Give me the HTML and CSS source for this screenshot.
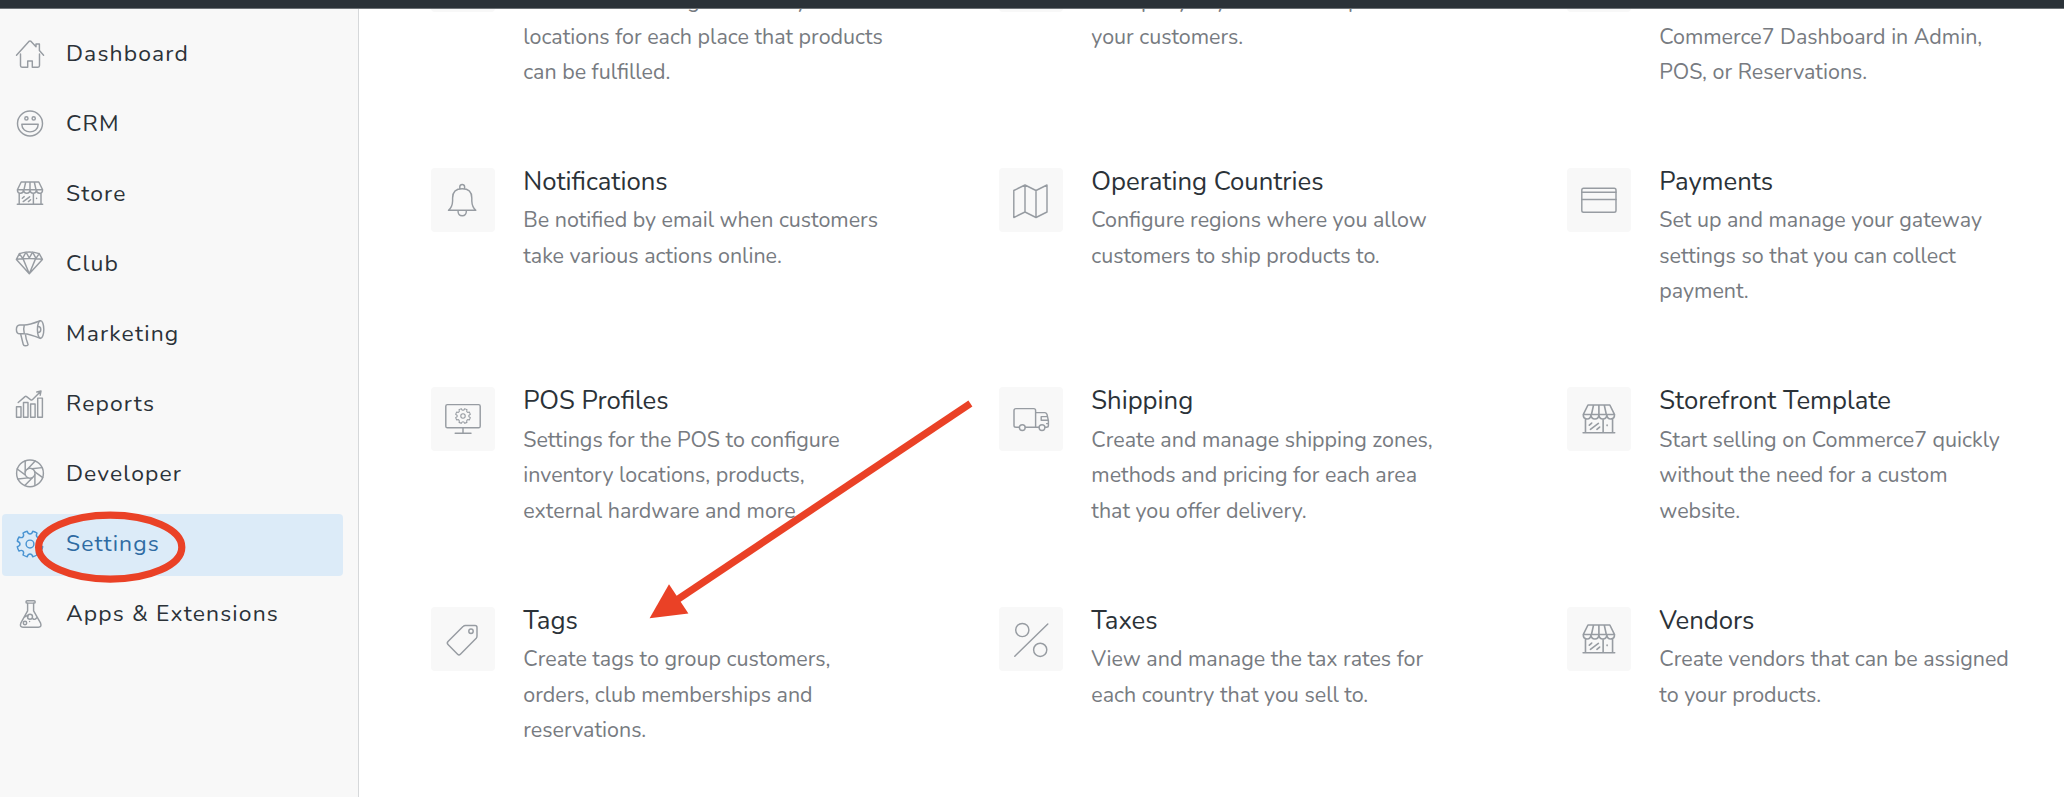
FILE: index.html
```html
<!DOCTYPE html>
<html lang="en">
<head>
<meta charset="utf-8">
<title>Settings</title>
<link rel="stylesheet" href="styles.css">
</head>
<body>
<svg class="sprite" aria-hidden="true">
  <symbol id="store" viewBox="0 0 28 28">
    <path d="M5.2 2H22.8L26.6 9.7H1.4ZM9.7 2L8 9.7M14 2V9.7M18.3 2L20 9.7M1.4 9.7C1.4 14.4 7.4 14.4 7.6 9.9C7.8 14.4 13.8 14.4 14 9.9C14.2 14.4 20.2 14.4 20.4 9.9C20.6 14.4 26.6 14.4 26.6 9.7M3.2 13V24.3M25 13V24.3M1.3 24.3H26.7M17.4 13.4V24.3M6.3 18.2L8.2 16.6M7.2 21.6L13.6 16.8M12.4 21.6L14.6 19.8M20.6 18.2V18.6"/>
  </symbol>
  <symbol id="gear" viewBox="-14 -14 28 28">
    <path d="M12.7 2.8A13 13 0 0 1 11 7C7.5 5.3 5.3 7.5 7 11A13 13 0 0 1 2.8 12.7C1.6 9.1-1.6 9.1-2.8 12.7A13 13 0 0 1-7 11C-5.3 7.5-7.5 5.3-11 7A13 13 0 0 1-12.7 2.8C-9.1 1.6-9.1-1.6-12.7-2.8A13 13 0 0 1-11-7C-7.5-5.3-5.3-7.5-7-11A13 13 0 0 1-2.8-12.7C-1.6-9.1 1.6-9.1 2.8-12.7A13 13 0 0 1 7-11C5.3-7.5 7.5-5.3 11-7A13 13 0 0 1 12.7-2.8C9.1-1.6 9.1 1.6 12.7 2.8Z"/>
    <circle r="3.9"/>
  </symbol>
</svg>

<header class="topbar"></header>

<div class="layout">
  <nav class="sidebar">
    <a class="nav-item"><svg class="nav-icon" viewBox="0 0 28 28"><path d="M.5 15.3L12.9 1.4Q14 .4 15.1 1.4L20 6.8V4H23.4V10.6L27.6 15.3M4.5 14V25.6Q4.5 27.2 6 27.2H11.7V21H16.3V27.2H22Q23.5 27.2 23.5 25.6V14"/></svg>Dashboard</a>
    <a class="nav-item"><svg class="nav-icon" viewBox="0 0 28 28"><circle cx="14" cy="13.5" r="12.5"/><circle cx="10.4" cy="8.4" r="1.6"/><circle cx="17.7" cy="8.4" r="1.6"/><path d="M5.8 14.2H22.2C22.2 24.4 5.8 24.4 5.8 14.2Z"/></svg>CRM</a>
    <a class="nav-item"><svg class="nav-icon"><use href="#store"/></svg>Store</a>
    <a class="nav-item"><svg class="nav-icon" viewBox="0 0 28 28"><path d="M3.4 3.6Q13.3 .6 23.2 3.6L26.4 9.4L13.3 23.8L.4 9.4ZM.4 9.2Q13.3 7.6 26.4 9.2M3.4 3.6L6.6 8.3L10 2.2L13.3 8L16.6 2.2L20 8.3L23.2 3.6M7 8.6L13.3 23.8L19.6 8.6"/></svg>Club</a>
    <a class="nav-item"><svg class="nav-icon" viewBox="0 0 28 28"><path d="M8.3 5Q13 5 24.3 .7M8.3 13.8Q13 14 24.3 18.3M8.3 5H3.8Q.4 5.4 .4 9.4Q.4 13.6 3.8 13.8H8.3Q7 9.4 8.3 5M4.6 13.8L7.2 24.2Q7.6 25.8 9.2 25.7L11 25.5Q12.6 25 11.8 23.6Q9.8 19 9.4 14"/><ellipse cx="24.6" cy="9.5" rx="3.2" ry="8.9"/><path d="M22 6.4Q24.8 6.4 24.8 9.4T22 12.4"/></svg>Marketing</a>
    <a class="nav-item"><svg class="nav-icon" viewBox="0 0 28 28"><path d="M.5 16.8H5V27.2H.5ZM7.5 12.4H12V27.2H7.5ZM14.6 13.9H19.1V27.2H14.6ZM21.7 8.1H26.4V27.2H21.7ZM2.2 12.5L9 6.6Q9.8 6 10.6 6.6L14.8 9.8Q15.8 10.4 16.6 9.6L24.6 1.4M20.8 2L25 1L24.2 5.2M22.4 1.8L24.4 3.6"/></svg>Reports</a>
    <a class="nav-item"><svg class="nav-icon" viewBox="0 0 28 28"><circle cx="14" cy="13.3" r="13.4"/><circle cx="14" cy="13.3" r="5"/><path d="M9.2 11.8V.9M11.6 8.9L19.2 1M16 8.7L26 7.6M18.8 11.8L26.8 17.6M18.9 14.6V25.6M16.4 17.7L8.8 25.6M12 17.9L2 19M9.2 14.8L1.2 9"/></svg>Developer</a>
    <a class="nav-item active"><svg class="nav-icon"><use href="#gear"/></svg>Settings</a>
    <a class="nav-item"><svg class="nav-icon" viewBox="0 0 28 28"><rect x="10" y=".7" width="9.2" height="2.4" rx="1.2"/><path d="M11.6 3.2V10.8L4.8 23.2Q3.4 27.2 7 27.2H22.4Q26 27.2 24.6 23.2L17.6 10.8V3.2M8 17.6Q10.4 15 12.2 16M16.8 18.6Q19 20.6 21 17.4"/><circle cx="14" cy="16.8" r="2.5"/><circle cx="9" cy="23" r="1.7"/><path d="M13.6 21.4V21.6"/></svg>Apps &amp; Extensions</a>
  </nav>

  <main class="content">
    <section class="card scrolled">
      <div class="tile"></div>
      <div class="card-body"><p>Create and manage inventory<br>locations for each place that products<br>can be fulfilled.</p></div>
    </section>
    <section class="card scrolled">
      <div class="tile"></div>
      <div class="card-body"><p>Set up my key items to keep<br>your customers.</p></div>
    </section>
    <section class="card scrolled-line">
      <div class="tile"></div>
      <div class="card-body"><p>Commerce7 Dashboard in Admin,<br>POS, or Reservations.</p></div>
    </section>

    <section class="card">
      <div class="tile"><svg viewBox="0 0 64 64"><path d="M17.5 42.3H44.8Q41 39 40.8 33V30Q40.8 20.8 31.2 20.8T21.6 30V33Q21.4 39 17.5 42.3ZM28.8 21V18.6Q29 16.4 31.2 16.4T33.6 18.6V21M27 42.5Q27 47.8 31.2 47.8T35.4 42.5"/></svg></div>
      <div class="card-body"><h2>Notifications</h2><p>Be notified by email when customers<br>take various actions online.</p></div>
    </section>
    <section class="card">
      <div class="tile"><svg viewBox="0 0 64 64"><path d="M14.8 22.5L26 17L37 22.5L48 17V44L37 49.5L26 44L14.8 49.5ZM26 17V44M37 22.5V49.5"/></svg></div>
      <div class="card-body"><h2>Operating Countries</h2><p>Configure regions where you allow<br>customers to ship products to.</p></div>
    </section>
    <section class="card">
      <div class="tile"><svg viewBox="0 0 64 64"><rect x="14.8" y="20.2" width="34.2" height="24" rx="1.8"/><path d="M14.8 24.2H49M14.8 31.4H49"/></svg></div>
      <div class="card-body"><h2>Payments</h2><p>Set up and manage your gateway<br>settings so that you can collect<br>payment.</p></div>
    </section>

    <section class="card">
      <div class="tile"><svg viewBox="0 0 64 64"><rect x="14.8" y="17.6" width="34.4" height="23.2" rx="1.6"/><path d="M32 41V46.2M24.2 46.3H40"/><svg class="mini-gear" x="24" y="21" width="16" height="16"><use href="#gear"/></svg></svg></div>
      <div class="card-body"><h2>POS Profiles</h2><p>Settings for the POS to configure<br>inventory locations, products,<br>external hardware and more.</p></div>
    </section>
    <section class="card">
      <div class="tile"><svg viewBox="0 0 64 64"><path d="M20.3 40.2H17Q15 40.2 15 38.4V23.4Q15 21.6 17 21.6H34.8Q36.6 21.6 36.6 23.4V40.2H26.3M36.6 25.6H46Q47.6 25.8 48 27.4L49.4 33.6V38.4Q49.4 40.2 47.4 40.2H46M40 40.2H36.6M47.8 29.6H42.2V33.2H48.6M49.2 36.6H47.6"/><circle cx="23.3" cy="40.6" r="2.9"/><circle cx="43" cy="40.6" r="2.9"/></svg></div>
      <div class="card-body"><h2>Shipping</h2><p>Create and manage shipping zones,<br>methods and pricing for each area<br>that you offer delivery.</p></div>
    </section>
    <section class="card">
      <div class="tile"><svg viewBox="0 0 64 64"><svg class="big-store" x="14.5" y="15.5" width="34.8" height="34.8"><use href="#store"/></svg></svg></div>
      <div class="card-body"><h2>Storefront Template</h2><p>Start selling on Commerce7 quickly<br>without the need for a custom<br>website.</p></div>
    </section>

    <section class="card">
      <div class="tile"><svg viewBox="0 0 64 64"><path d="M34.6 18.4H44Q46 18.4 46 20.4V29Q46 30.2 45.2 31.2L29.4 47.2Q28 48.6 26.6 47.2L17 37.6Q15.6 36.2 17 34.6L32 19.6Q33 18.4 34.6 18.4Z"/><circle cx="40" cy="24.2" r="2.2"/></svg></div>
      <div class="card-body"><h2>Tags</h2><p>Create tags to group customers,<br>orders, club memberships and<br>reservations.</p></div>
    </section>
    <section class="card">
      <div class="tile"><svg viewBox="0 0 64 64"><circle cx="23.3" cy="23" r="6.6"/><circle cx="41.2" cy="42.8" r="6.6"/><path d="M15.8 49.2L48.8 17"/></svg></div>
      <div class="card-body"><h2>Taxes</h2><p>View and manage the tax rates for<br>each country that you sell to.</p></div>
    </section>
    <section class="card">
      <div class="tile"><svg viewBox="0 0 64 64"><svg class="big-store" x="14.5" y="15.5" width="34.8" height="34.8"><use href="#store"/></svg></svg></div>
      <div class="card-body"><h2>Vendors</h2><p>Create vendors that can be assigned<br>to your products.</p></div>
    </section>
  </main>
</div>

<svg class="annotation" viewBox="0 0 2064 797" aria-hidden="true">
  <ellipse cx="110.2" cy="547.2" rx="71.6" ry="32" />
  <path class="shaft" d="M970.4 403.6L676 600.4"/>
  <path class="head" d="M649.6 618.3L669 584.3L688.4 613.4Z"/>
</svg>
</body>
</html>
```
FILE: styles.css
```css
* {
  box-sizing: border-box;
}

body {
  margin: 0;
  height: 797px;
  overflow: hidden;
  background: #fff;
  color: #2b3238;
  font-family: Nunito, Lato, sans-serif;
}

svg {
  fill: none;
  stroke: #979ca2;
  stroke-width: 1.45;
  stroke-linecap: round;
  stroke-linejoin: round;
}

.sprite {
  display: none;
}

.topbar {
  height: 9px;
  background: #2b3238;
  border-bottom: 1px solid #6d7276;
  position: relative;
  z-index: 1;
}

.layout {
  display: flex;
  height: 788px;
}

.sidebar {
  width: 359px;
  flex: none;
  display: flex;
  flex-direction: column;
  gap: 7.8px;
  padding: 14px 15px 0 1.5px;
  background: #f8f8f8;
  border-right: 1px solid #d6d8da;
}

.nav-item {
  display: flex;
  align-items: center;
  gap: 22px;
  height: 62.3px;
  flex: none;
  padding-left: 14.5px;
  border-radius: 4px;
  font-size: 22.9px;
  line-height: 30px;
  padding-bottom: 1px;
  letter-spacing: 1.14px;
  white-space: nowrap;
}

.nav-icon {
  width: 28px;
  height: 28px;
  flex: none;
  overflow: visible;
}

.active {
  background: #dcebf8;
  color: #2f6ba3;
}

.active .nav-icon {
  stroke: #4a94d2;
}

.content {
  flex: 1;
  display: grid;
  grid-template-columns: repeat(3, 568px);
  grid-auto-rows: 219.6px;
  margin-top: -60.8px;
  padding-left: 71.7px;
}

.card {
  display: flex;
  align-items: flex-start;
  gap: 28.6px;
}

.tile {
  width: 64px;
  height: 64px;
  flex: none;
  border-radius: 4px;
  background: #f8f8f8;
}

.tile svg {
  display: block;
  overflow: visible;
}

.tile .mini-gear {
  stroke-width: 1.9;
}

.tile .big-store {
  stroke-width: 1.3;
}

.card-body {
  white-space: nowrap;
}

h2 {
  margin: -4px 0 0;
  font-size: 25.7px;
  font-weight: 400;
  line-height: 36px;
}

p {
  margin: 3.4px 0 0;
  color: #777b81;
  font-size: 21.45px;
  line-height: 35.4px;
}

/* First row is partly scrolled under the top bar */
.scrolled p {
  margin-top: 36px;
}

.scrolled-line p {
  margin-top: 71.4px;
}

.annotation {
  position: absolute;
  left: 0;
  top: 0;
  width: 2064px;
  height: 797px;
  z-index: 2;
  stroke: #ea4126;
  stroke-width: 7.2;
  stroke-linecap: butt;
}

.annotation .head {
  fill: #ea4126;
  stroke: none;
}
```
